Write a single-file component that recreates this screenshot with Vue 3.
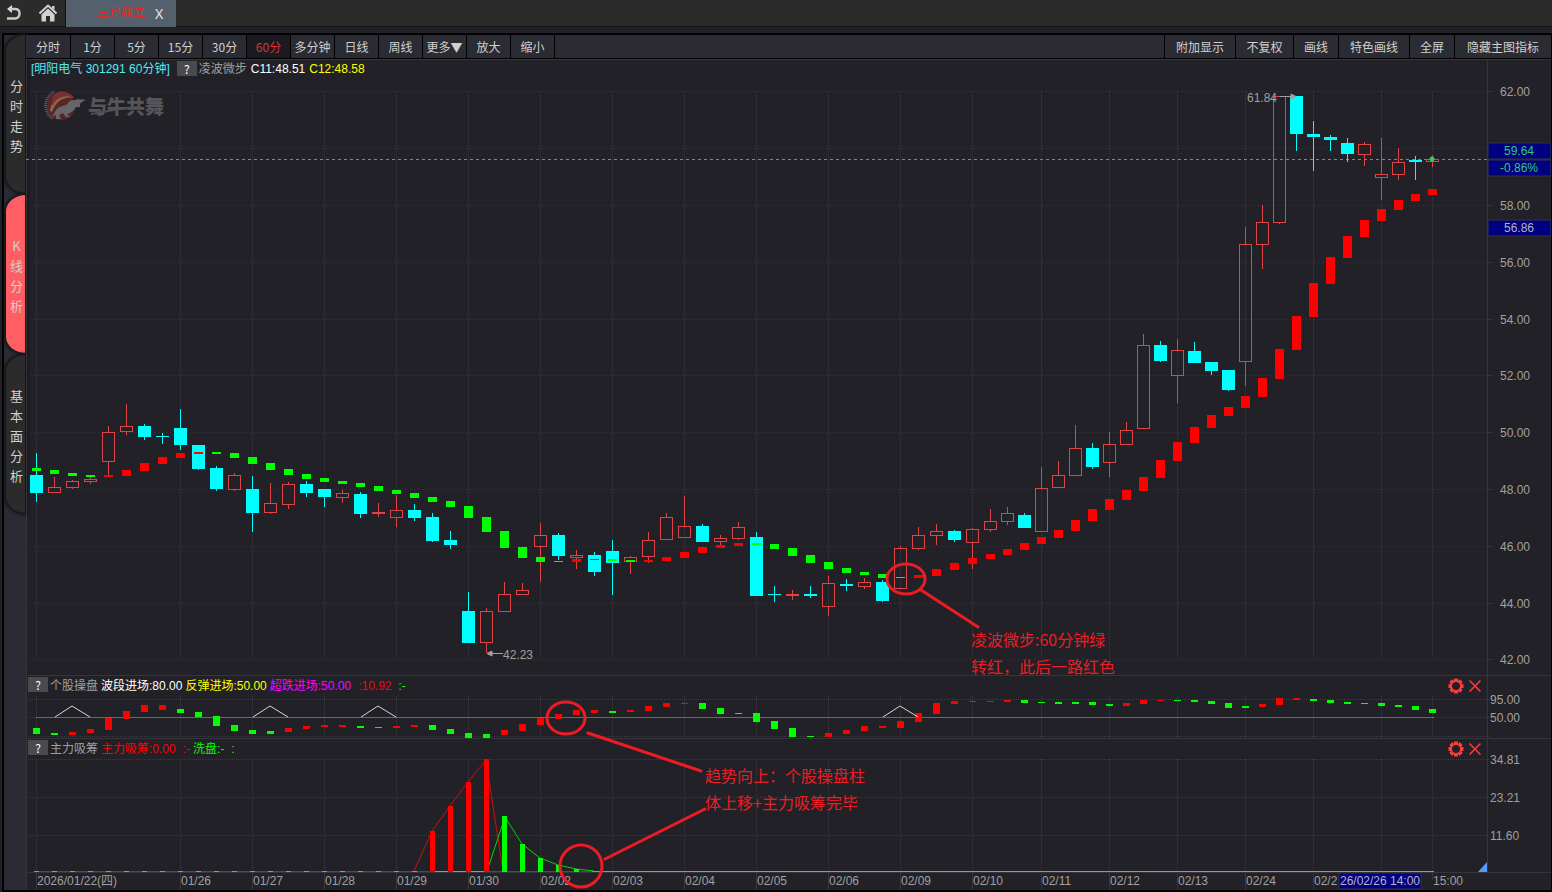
<script setup>
import { ref } from 'vue'

const periods = ['分时', '1分', '5分', '15分', '30分', '60分', '多分钟', '日线', '周线', '更多▼', '放大', '缩小']
const activePeriod = ref('60分')
const tools = ['附加显示', '不复权', '画线', '特色画线', '全屏', '隐藏主图指标']
const views = ['分时走势', 'K线分析', '基本面分析']
const activeView = ref('K线分析')

const barX = (i) => (i <= 53 ? 36 + 18 * i : 1041 + 17 * (i - 56))

/* kind (r = rising, c = falling), high, body top, body bottom, low */
const candles = `c 453 475 493 502|r 477 487 493 493|r 480 481 488 489|r 477 479 482 484|r 426 432 462 476|r 404 426 432 435|c 424 426 437 440|c 433 436 437 444|c 409 428 445 450|c 445 445 469 470|c 466 468 489 491|r 473 475 490 491|c 476 489 513 532|r 483 503 513 514|r 482 484 505 509|c 481 484 493 497|c 489 489 497 507|r 490 493 498 503|c 492 494 514 518|r 503 512 514 517|r 495 510 518 527|c 504 510 518 521|c 513 517 541 542|c 531 540 545 549|c 592 611 643 643|r 608 611 643 653|r 582 594 612 612|r 583 590 595 595|r 523 535 547 582|c 533 535 556 560|r 550 555 558 569|c 552 555 572 576|c 540 551 563 595|r 556 557 562 574|r 532 540 557 563|r 513 517 540 540|r 496 526 538 538|c 524 526 542 542|r 535 538 542 545|r 522 527 539 540|c 532 537 596 596|c 586 594 595 602|r 590 594 596 600|c 586 594 596 598|r 576 583 607 616|c 579 584 586 591|r 578 582 587 589|c 580 582 601 602|r 546 548 589 589|r 527 535 549 550|r 524 531 536 545|c 530 531 540 542|r 528 529 543 569|r 509 521 530 532|r 507 513 522 525|c 513 515 528 528|r 467 488 532 532|r 461 475 488 488|r 425 448 476 476|c 443 448 467 469|r 432 444 463 477|r 422 430 445 445|r 334 345 429 429|c 341 345 361 362|r 339 350 376 403|c 342 351 363 363|c 362 362 371 375|c 370 370 390 391|r 227 244 362 386|r 205 222 245 269|r 96 96 223 224|c 96 96 134 151|c 121 134 137 171|c 135 137 140 151|c 138 143 154 162|r 142 144 155 166|r 138 174 178 200|r 148 162 175 180|c 156 160 162 180|r 155 159 162 167`
  .split('|')
  .map((row, i) => {
    const [kind, ...v] = row.split(' ')
    const [high, top, bottom, low] = v.map(Number)
    return { x: barX(i), kind, high, top, bottom, low, hollow: kind === 'r' && bottom - top > 2 }
  })

const parseSteps = (text) =>
  text.split('|').map((row, i) => {
    const [kind, top, bottom] = row.split(' ')
    return { x: barX(i), kind, top: +top, height: bottom - top }
  })

const trend = parseSteps(`g 468 471|g 470 474|g 473 476|g 475 477|r 475 477|r 470 476|r 463 471|r 457 464|r 453 458|r 452 454|g 452 454|g 453 458|g 457 464|g 463 470|g 469 475|g 474 479|g 478 482|g 481 484|g 483 487|g 486 491|g 490 494|g 493 498|g 497 502|g 501 507|g 506 518|g 517 532|g 531 548|g 547 558|g 557 562|g 561 562|r 559 562|r 559 560|g 559 561|g 560 562|r 560 562|r 557 561|r 552 558|r 547 553|r 545 548|r 543 546|g 543 545|g 544 549|g 548 556|g 555 563|g 562 569|g 568 573|g 572 575|g 574 578|g 577 578|r 575 578|r 569 576|r 563 570|r 558 564|r 554 559|r 549 555|r 543 550|r 537 544|r 530 538|r 520 531|r 509 521|r 499 510|r 490 500|r 477 491|r 460 478|r 442 461|r 427 443|r 415 428|r 407 416|r 396 408|r 378 397|r 349 379|r 316 350|r 283 317|r 257 284|r 236 258|r 220 237|r 209 221|r 200 210|r 194 201|r 189 195`)

const swing = parseSteps(`g 728 734|g 733 735|r 732 735|r 729 733|r 718 730|r 711 719|r 705 712|r 705 710|g 709 713|g 712 717|g 716 726|g 725 731|g 730 734|g 731 734|r 728 732|r 726 729|r 725 727|r 725 727|g 726 728|g 727 728|r 726 728|r 725 727|g 725 730|g 729 734|g 733 738|g 734 738|r 730 735|r 724 731|r 718 725|r 714 719|r 710 715|r 710 713|g 711 713|r 710 712|r 706 711|r 703 707|r 703 704|g 703 709|g 708 714|g 713 714|g 713 722|g 721 729|g 728 737|g 736 737|r 733 737|r 730 734|r 726 731|r 726 728|r 721 728|r 713 722|r 703 714|r 701 704|r 701 702|r 701 702|r 700 702|g 700 703|g 702 703|g 702 704|g 702 704|g 702 705|g 704 706|r 703 706|r 700 704|r 700 701|g 700 701|g 700 702|g 701 704|g 703 708|g 706 708|r 704 707|r 698 705|r 698 700|g 699 701|g 700 703|g 702 704|g 703 704|g 703 706|g 705 707|g 706 710|g 709 713`)

const volumeBars = [
  { x: 432, top: 831, kind: 'r' }, { x: 450, top: 806, kind: 'r' }, { x: 468, top: 782, kind: 'r' }, { x: 486, top: 759, kind: 'r' },
  { x: 504, top: 816, kind: 'g' }, { x: 522, top: 844, kind: 'g' }, { x: 540, top: 858, kind: 'g' }, { x: 558, top: 865, kind: 'g' }, { x: 576, top: 869, kind: 'g' },
]
const flatMarks = Array.from({ length: 22 }, (_, i) => barX(i))
const peaks = [72, 270, 378, 900]

const dates = [
  [36, '2026/01/22(四)'], [180, '01/26'], [252, '01/27'], [324, '01/28'], [396, '01/29'], [468, '01/30'], [540, '02/02'],
  [612, '02/03'], [684, '02/04'], [756, '02/05'], [828, '02/06'], [900, '02/09'], [972, '02/10'], [1041, '02/11'],
  [1109, '02/12'], [1177, '02/13'], [1245, '02/24'], [1313, '02/2'], [1381, ''], [1432, '15:00'],
]
const prices = [
  [91, '62.00'], [148, ''], [205, '58.00'], [262, '56.00'], [319, '54.00'], [375, '52.00'], [432, '50.00'],
  [489, '48.00'], [546, '46.00'], [603, '44.00'], [659, '42.00'],
]
const lowerScale = [[699, '95.00'], [717, '50.00'], [736, ''], [759, '34.81'], [797, '23.21'], [835, '11.60']]
</script>

<template>
  <div class="app">
    <header class="topbar">
      <button class="icon-btn back" aria-label="返回">
        <svg width="16" height="18" viewBox="0 0 16 18">
          <path d="M6 1 L1 5 L6 9 Z" fill="#dcdcdc" />
          <path d="M4 5 H9 C12.500 5 13.500 7.500 13.500 9.500 C13.500 12 12 14.500 9 14.500 H1" fill="none" stroke="#c9c9c9" stroke-width="2.500" />
        </svg>
      </button>
      <button class="icon-btn home" aria-label="首页">
        <svg width="18" height="18" viewBox="0 0 18 18">
          <path d="M0.500 9.500 L9 1.500 L17.500 9.500" fill="none" stroke="#d2d2d2" stroke-width="2" />
          <path d="M13 2 H15.500 V6 L13 4 Z M9 4.500 L15.500 10.500 V17.500 H11 V12 H7 V17.500 H2.500 V10.500 Z" fill="#d2d2d2" />
        </svg>
      </button>
      <div class="doc-tab">
        <a href="#" class="doc-name">三足鼎立</a>
        <button class="doc-close" aria-label="关闭">X</button>
      </div>
    </header>

    <div class="frame">
      <nav class="rail">
        <button
          v-for="view in views"
          :key="view"
          class="rail-tab"
          :class="{ active: view === activeView }"
          @click="activeView = view"
        >
          <span v-for="(ch, i) in view" :key="i">{{ ch }}</span>
        </button>
      </nav>

      <main class="workspace">
        <div class="toolbar">
          <button
            v-for="p in periods"
            :key="p"
            class="period"
            :class="{ active: p === activePeriod }"
            @click="activePeriod = p"
          >{{ p }}</button>
          <div class="spacer"></div>
          <button v-for="t in tools" :key="t" class="tool" :style="{ width: t.length * 13 + 19 + 'px' }">{{ t }}</button>
        </div>

        <div class="chart">
          <svg class="canvas" viewBox="26 59 1525 831">
            <g class="frame-lines">
              <rect x="26" y="59" width="1525" height="1" />
              <rect x="26" y="59" width="1" height="831" />
              <rect x="1487" y="59" width="1" height="814" />
              <rect x="26" y="675" width="1525" height="1" />
              <rect x="26" y="738" width="1525" height="1" />
              <rect x="26" y="872" width="1525" height="1" />
              <rect v-for="d in dates" :key="d[0]" :x="d[0]" y="872" width="1" :height="d[0] === 1432 ? 8 : 18" />
              <rect v-for="p in prices" :key="p[0]" x="1487" :y="p[0]" width="6" height="1" />
            </g>

            <g class="grid">
              <line v-for="p in prices" :key="p[0]" class="wide" x1="30" :y1="p[0] + 0.5" x2="1487" :y2="p[0] + 0.5" />
              <line v-for="s in lowerScale" :key="s[0]" x1="28" :y1="s[0] + 0.5" x2="1489" :y2="s[0] + 0.5" />
              <template v-for="d in dates" :key="d[0]">
                <line :x1="d[0] + 0.5" y1="91" :x2="d[0] + 0.5" y2="659" />
                <line :x1="d[0] + 0.5" y1="696" :x2="d[0] + 0.5" y2="737" />
                <line :x1="d[0] + 0.5" y1="759" :x2="d[0] + 0.5" y2="871" />
              </template>
            </g>

            <g class="logo">
              <circle cx="61" cy="106" r="14" fill="#5c2529" />
              <path d="M50 111 C51 99 60 93 68 94 L74 98 C64 96 56 101 52 112 Z" fill="#8a6a3c" />
              <path d="M57 92.500 C64 90 71 93 74 98 C65 94 57 97 52 106 C51 99 53 95 57 92.500 Z" fill="#793034" />
              <path d="M54 92 A15.500 15.500 0 0 0 53 119" fill="none" stroke="#68585b" stroke-width="3" stroke-dasharray="1 1" />
              <path d="M52 117 L56 110 C60 105 66 107 69 102 C72 99 76 101 77 99 C80 100 82 99 86 100 C83 101 81 102 80 104 L80 107 L76 107 C73 113 69 112 67 115 L71 117 L66 117 L63 113 L59 115 L61 119 L56 119 L56 115 Z" fill="#66666b" />
              <text x="88" y="114">与牛共舞</text>
              <path d="M91 114 C108 112 116 108 139 107" fill="none" stroke="#4f4f54" stroke-width="2" />
            </g>

            <line class="last-price" x1="26" y1="159.500" x2="1487" y2="159.500" />

            <g class="candles">
              <g v-for="c in candles" :key="c.x" :class="c.kind">
                <rect v-if="c.top > c.high" :x="c.x" :y="c.high" width="1" :height="c.top - c.high" />
                <rect v-if="c.low > c.bottom" :x="c.x" :y="c.bottom" width="1" :height="c.low - c.bottom" />
                <rect v-if="c.hollow" class="hollow" :x="c.x - 5.5" :y="c.top + 0.5" width="12" :height="c.bottom - c.top - 1" />
                <rect v-else :x="c.x - 6" :y="c.top" width="13" :height="c.bottom - c.top" />
              </g>
            </g>
            <g class="steps">
              <rect v-for="t in trend" :key="t.x" :class="t.kind" :x="t.x - 4" :y="t.top" width="9" :height="t.height" />
            </g>
            <circle cx="1432" cy="159" r="2.500" fill="#2ecc71" />

            <g class="callouts">
              <path d="M1280 96.500 H1296 M487 653.500 H503" />
              <path class="tip" d="M1291 94 L1296 96.500 L1291 99 Z M492 651 L487 653.500 L492 656 Z" />
              <text x="1247" y="102">61.84</text>
              <text x="503" y="659">42.23</text>
            </g>

            <g class="steps">
              <rect x="36" y="717" width="1398" height="1" fill="#f0f" />
              <rect v-for="s in swing" :key="s.x" :class="s.kind" :x="s.x - 3" :y="s.top" width="7" :height="s.height" />
            </g>
            <path v-for="x in peaks" :key="x" class="peak" :d="`M${x - 17} 717 L${x} 706 L${x + 18} 717`" />

            <g class="steps">
              <rect class="r" x="36" y="871" width="560" height="1" />
              <rect v-for="x in flatMarks" :key="x" class="g" :x="x - 2" y="871" width="5" height="1" />
              <rect class="g" x="432" y="871" width="55" height="1" />
              <rect class="g" x="592" y="871" width="842" height="1" />
            </g>
            <polyline class="flow up" points="414,871 432,831 450,806 468,782 486,760 503,871" />
            <polyline class="flow down" points="487,871 505,817 522,844 540,858 558,865 576,869 594,871" />
            <g class="steps">
              <rect v-for="b in volumeBars" :key="b.x" :class="b.kind" :x="b.x - 2" :y="b.top" width="5" :height="872 - b.top" />
            </g>
            <path d="M1487 862 V872 H1478 Z" fill="#4f9dff" />

            <g class="labels">
              <text v-for="p in prices" :key="p[0]" x="1500" :y="p[0] + 5">{{ p[1] }}</text>
              <text v-for="s in lowerScale" :key="s[0]" x="1490" :y="s[0] + 5">{{ s[1] }}</text>
              <text v-for="d in dates" :key="d[0]" :x="d[0] + 1" y="885">{{ d[1] }}</text>
            </g>

            <g class="tags">
              <rect x="1488" y="143" width="63" height="16" />
              <rect x="1488" y="160" width="63" height="16" />
              <rect x="1488" y="220" width="63" height="16" />
              <rect x="1339" y="873" width="82" height="16" />
              <text class="gain" x="1519" y="155">59.64</text>
              <text class="gain" x="1519" y="172">-0.86%</text>
              <text x="1519" y="232">56.86</text>
              <text x="1380" y="885">26/02/26 14:00</text>
            </g>

            <g class="notes">
              <ellipse cx="906" cy="579" rx="19" ry="15" />
              <path d="M921 590 L978 627" />
              <ellipse cx="566" cy="718" rx="19" ry="16" />
              <path d="M588 733 L701 771" />
              <circle cx="581" cy="866" r="21" />
              <path d="M605 859 L705 809" />
              <text x="971" y="646">凌波微步:60分钟绿</text>
              <text x="971" y="673">转红，此后一路红色</text>
              <text x="705" y="782">趋势向上：个股操盘柱</text>
              <text x="705" y="809">体上移+主力吸筹完毕</text>
            </g>
          </svg>

          <div class="overlay">
            <section class="legend first">
              <span class="cyan">[明阳电气 301291 60分钟]</span>
              <button class="help" aria-label="指标说明">?</button>
              <span class="name">凌波微步</span>
              <span class="white">C11:48.51</span>
              <span class="yellow">C12:48.58</span>
            </section>
            <section v-for="n in 2" :key="n" class="legend">
              <button class="help" aria-label="指标说明">?</button>
              <template v-if="n === 1">
                <span class="name">个股操盘</span>
                <span class="white">波段进场:80.00</span>
                <span class="yellow">反弹进场:50.00</span>
                <span class="magenta">超跌进场:50.00</span>
                <span class="red spaced">:10.92</span>
                <span class="green spaced">:-</span>
              </template>
              <template v-else>
                <span class="name">主力吸筹</span>
                <span class="red">主力吸筹:0.00</span>
                <span class="red spaced">:-</span>
                <span class="green">洗盘:-</span>
                <span class="green spaced">:</span>
              </template>
              <div class="spacer"></div>
              <button class="mini" aria-label="设置">
                <svg width="16" height="16" viewBox="0 0 16 16">
                  <g fill="#ff3b3b">
                    <rect v-for="a in 8" :key="a" x="6" y="0.500" width="4" height="3" :transform="`rotate(${a * 45} 8 8)`" />
                  </g>
                  <circle cx="8" cy="8" r="5" fill="none" stroke="#ff3b3b" stroke-width="2" />
                </svg>
              </button>
              <button class="mini" aria-label="关闭指标">
                <svg width="12" height="12" viewBox="0 0 12 12"><path d="M0.500 0.500 L11.500 11.500 M11.500 0.500 L0.500 11.500" stroke="#ff3b3b" stroke-width="1.500" /></svg>
              </button>
            </section>
          </div>
        </div>
      </main>
    </div>
  </div>
</template>

<style>
body {
  margin: 0;
  background: #222127;
}
</style>

<style scoped>
.app {
  display: flex;
  flex-direction: column;
  min-height: 100vh;
  font: 12px/16px "Liberation Sans", "Noto Sans CJK SC", sans-serif;
  color: #a0a0a0;
}
button {
  margin: 0;
  padding: 0;
  border: 0;
  background: none;
  font: inherit;
  color: inherit;
  cursor: pointer;
}
.spacer { flex: 1; }

.topbar {
  display: flex;
  height: 26px;
  background: #2b2b2b;
  border-bottom: 1px solid #131313;
}
.icon-btn {
  display: flex;
  align-items: center;
  justify-content: center;
  box-sizing: border-box;
}
.back { width: 28px; }
.home {
  width: 38px;
  padding-left: 3px;
  border-right: 1px solid #111;
}
.doc-tab {
  display: flex;
  align-items: center;
  height: 27px;
  background: #54616c;
  padding: 0 13px 0 31px;
  gap: 10px;
}
.doc-name {
  color: #e02a2a;
  text-decoration: none;
  padding-bottom: 2px;
}
.doc-close {
  font: 14px/16px "Noto Sans", sans-serif;
  color: #e6e6e6;
}

.frame {
  display: flex;
  flex: 1;
  margin: 6px 0 0 2px;
  border: 2px solid #000;
  border-right-width: 1px;
}
.rail {
  width: 22px;
  flex: none;
  background: #2a2b35;
  display: flex;
  flex-direction: column;
  gap: 2px;
}
.rail-tab {
  display: flex;
  flex-direction: column;
  align-items: center;
  justify-content: center;
  height: 158px;
  margin-left: 2px;
  padding: 4px 0 0 2px;
  box-sizing: border-box;
  border-radius: 20px 0 0 20px / 16px 0 0 16px;
  background: #2b2b2b;
  box-shadow: 0 0 3px 2px #15151a;
  border-right: 1px solid #151518;
  font: 13px/20px "Noto Sans CJK SC", sans-serif;
  color: #d0d0d0;
}
.rail-tab.active { background: #ff5f63; }

.workspace { flex: 1; min-width: 0; }
.toolbar {
  display: flex;
  height: 23px;
  background: #2b2b33;
  border-bottom: 1px solid #000;
}
.toolbar button {
  box-sizing: border-box;
  font: 12px/22px "Noto Sans CJK SC", sans-serif;
  color: #d0d0d0;
  white-space: nowrap;
}
.period {
  width: 44px;
  border-right: 1px solid #000;
}
.period:first-child { width: 45px; }
.toolbar .period.active {
  color: #d83434;
  background: #1b1a20;
}
.tool { border-left: 1px solid #000; }

.chart { display: grid; }
.canvas,
.overlay { grid-area: 1 / 1; }
.canvas {
  display: block;
  width: 100%;
  height: auto;
}
.overlay {
  display: grid;
  grid-template-rows: 617fr 63fr 151fr;
  pointer-events: none;
}
.legend {
  display: flex;
  align-items: center;
  height: 20px;
  padding: 0 70px 0 2px;
  gap: 3px;
  white-space: nowrap;
  pointer-events: auto;
}
.legend.first {
  padding-left: 5px;
  gap: 4px;
}
.help {
  align-self: flex-start;
  width: 20px;
  height: 15px;
  margin: 1px -1px 0 0;
  background: #4a4b4f;
  color: #fff;
  font: 12px/14px "Noto Sans CJK SC", sans-serif;
}
.legend.first .help { margin: 2px -2px 0 3px; }
.name { color: #a0a0a0; }
.cyan { color: #54e8f5; }
.white { color: #fff; }
.yellow { color: #ff0; }
.magenta { color: #f0f; }
.red { color: #f00; }
.green { color: #0f0; }
.spaced { margin-left: 4px; }
.mini {
  display: flex;
  margin-left: 2px;
}

.frame-lines { fill: #36353c; shape-rendering: crispEdges; }
.grid line {
  stroke: #3b3a41;
  stroke-dasharray: 1 1;
  shape-rendering: crispEdges;
}
.grid line.wide { stroke-dasharray: 1 3; }
.logo text {
  font: 900 19px "Noto Sans CJK SC", sans-serif;
  fill: #55555a;
}
.last-price {
  stroke: #3a96f0;
  stroke-dasharray: 3 3;
  shape-rendering: crispEdges;
}
.candles { shape-rendering: crispEdges; }
.candles .r { fill: #e04343; }
.candles .c { fill: #0ff; }
.candles .hollow {
  fill: none;
  stroke: #e04343;
}
.steps { shape-rendering: crispEdges; }
.steps .r { fill: #f00; }
.steps .g { fill: #0f0; }
.callouts path { fill: none; stroke: #a0a0a0; }
.callouts .tip { fill: #a0a0a0; }
.callouts text,
.labels text { fill: #a0a0a0; }
.peak { fill: none; stroke: #d8d8d8; }
.flow { fill: none; }
.flow.up { stroke: #c41212; }
.flow.down { stroke: #0ad00a; }
.tags rect {
  fill: #000080;
  stroke: #36353c;
}
.tags text {
  fill: #b4b4c4;
  text-anchor: middle;
}
.tags .gain { fill: #2ecc71; }
.notes {
  fill: none;
  stroke: #ed1c24;
  stroke-width: 3;
  stroke-linecap: round;
}
.notes text {
  font: 16px "Noto Sans CJK SC", sans-serif;
  fill: #ed1c24;
  stroke: none;
}
</style>
